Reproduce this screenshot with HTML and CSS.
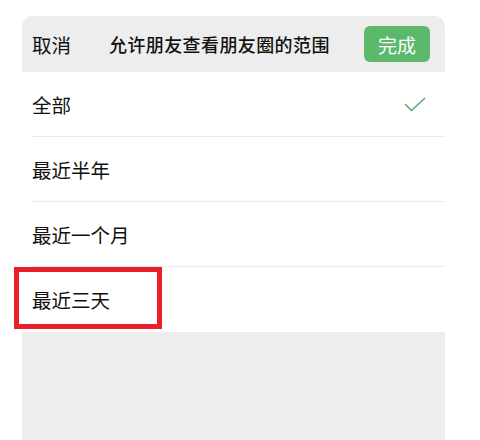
FILE: index.html
```html
<!DOCTYPE html>
<html lang="zh-CN">
<head>
    <meta charset="UTF-8">
    <title>允许朋友查看朋友圈的范围</title>
    <link rel="stylesheet" href="styles.css">
</head>
<body>
    <div class="painel">
        <div class="topo">
            <span class="cancelar">取消</span>
            <span class="titulo">允许朋友查看朋友圈的范围</span>
            <button class="concluir">完成</button>
        </div>

        <div class="lista">
            <div class="item">
                <div class="item-texto">
                    <span>全部</span>
                    <svg class="check" width="24" height="18" viewBox="0 0 24 18">
                        <path d="M2 8 L8.5 14.5 L22 2" fill="none" stroke="#5aa872" stroke-width="1.6"/>
                    </svg>
                </div>
            </div>
            <div class="item">
                <div class="item-texto"><span>最近半年</span></div>
            </div>
            <div class="item">
                <div class="item-texto"><span>最近一个月</span></div>
            </div>
            <div class="item">
                <div class="item-texto ultimo"><span>最近三天</span></div>
            </div>
        </div>

        <div class="vazio"></div>
    </div>

    <div class="destaque"></div>
</body>
</html>
```

FILE: styles.css
```css
body {
    font-family: "Noto Sans CJK SC", "Noto Sans", sans-serif;
    background-color: #fff;
    margin: 0;
    padding: 0;
    color: #111;
}

.painel {
    width: 423px;
    margin: 16px 0 0 22px;
}

.topo {
    display: flex;
    align-items: center;
    height: 56px;
    padding: 0 15px 0 10px;
    background-color: #ededed;
    border-radius: 10px 10px 0 0;
    font-size: 18px;
}

.cancelar {
    width: 40px;
    font-size: 19.5px;
}

.titulo {
    margin-left: 37px;
    font-weight: 500;
    font-size: 18px;
    letter-spacing: 0.4px;
}

.concluir {
    margin-left: auto;
    width: 66px;
    height: 36px;
    background-color: #5cb96b;
    color: #fff;
    border: none;
    border-radius: 6px;
    font-family: inherit;
    font-size: 19px;
    padding: 0;
}

.item {
    height: 65px;
    padding-left: 10px;
}

.item-texto {
    display: flex;
    align-items: center;
    justify-content: space-between;
    height: 64px;
    border-bottom: 1px solid #ececec;
    font-size: 19.5px;
    padding-right: 18px;
}

.item-texto.ultimo {
    border-bottom: none;
}

.check {
    margin-top: 2px;
}

.vazio {
    height: 110px;
    background-color: #ededed;
}

.destaque {
    position: absolute;
    left: 14px;
    top: 267px;
    width: 138px;
    height: 52px;
    border: 5px solid #e8202a;
}
```
